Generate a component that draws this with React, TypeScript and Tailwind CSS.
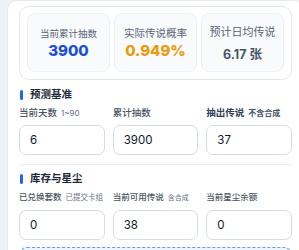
import React from 'react';

const Field = ({
  label,
  note,
  value,
  size = 'text-[9.5px]',
  noteSize = 'text-[8px]',
  strong = false,
}: {
  label: string;
  note?: string;
  value: string;
  size?: string;
  noteSize?: string;
  strong?: boolean;
}) => (
  <div className="flex min-w-0 flex-col">
    <div className="flex h-[13px] items-baseline gap-[4px] whitespace-nowrap">
      <span className={`${size} ${strong ? 'font-semibold text-[#334155]' : 'font-medium text-[#4b5563]'}`}>{label}</span>
      {note && (
        <span className={`${noteSize} ${strong ? 'font-semibold text-[#475569]' : 'text-[#6b7280]'}`}>{note}</span>
      )}
    </div>
    <input
      type="text"
      readOnly
      value={value}
      className="mt-[6px] h-[30px] w-full rounded-[7px] border border-[#d6dde8] bg-white px-[10px] text-[11.5px] text-[#111827] outline-none"
    />
  </div>
);

const SectionTitle = ({ title }: { title: string }) => (
  <div className="flex h-[14px] items-center gap-[7px] pl-[1px]">
    <div className="h-[10px] w-[3px] rounded-full bg-[#2563eb]" />
    <span className="text-[10.5px] font-bold text-[#1e293b]">{title}</span>
  </div>
);

const App = () => {
  return (
    <div className="h-screen w-full overflow-hidden bg-[#eef2f7] pl-[7px] font-['Inter','Noto_Sans_CJK_SC',sans-serif]">
      <div className="w-[297px] rounded-[10px] border border-[#e5e9f0] bg-white px-[11px] pt-[5px] pb-[20px]">
        {/* summary */}
        <div className="rounded-[10px] border border-[#e3e8ef] px-[7px] pt-[6px] pb-[7px]">
          <div className="grid grid-cols-3 gap-[4px]">
            <div className="flex h-[59px] flex-col items-center justify-center rounded-[8px] border border-[#edf0f5] bg-[#f8fafc] pt-[2px]">
              <span className="text-[9.5px] leading-[12px] text-[#5b6576]">当前累计抽数</span>
              <span className="mt-[2px] text-[15px] font-extrabold leading-[18px] text-[#1d4ed8]">3900</span>
            </div>
            <div className="flex h-[59px] flex-col items-center justify-center rounded-[8px] border border-[#edf0f5] bg-[#f8fafc] pt-[2px]">
              <span className="text-[10.5px] leading-[12px] text-[#5b6576]">实际传说概率</span>
              <span className="mt-[2px] text-[15px] font-extrabold leading-[18px] text-[#eb9a0b]">0.949%</span>
            </div>
            <div className="flex h-[59px] flex-col items-center justify-center rounded-[8px] border border-[#edf0f5] bg-[#f8fafc] pt-[2px]">
              <span className="text-[11px] leading-[14px] text-[#5b6576]">预计日均传说</span>
              <span className="mt-[8px] text-[12.5px] font-bold leading-[16px] text-[#475569]">6.17 张</span>
            </div>
          </div>
        </div>

        {/* forecast base */}
        <div className="mt-[8px]">
          <SectionTitle title="预测基准" />
          <div className="mt-[4px] grid grid-cols-3 gap-x-[8px]">
            <Field label="当前天数" note="1~90" value="6" />
            <Field label="累计抽数" value="3900" />
            <Field label="抽出传说" note="不含合成" value="37" strong />
          </div>
        </div>

        <div className="mt-[9px] border-t border-[#e8ecf2]" />

        {/* stock & dust */}
        <div className="mt-[7px]">
          <SectionTitle title="库存与星尘" />
          <div className="mt-[5px] grid grid-cols-3 gap-x-[8px]">
            <Field label="已兑换套数" note="已提交卡组" value="0" size="text-[8.5px]" noteSize="text-[7.5px]" />
            <Field label="当前可用传说" note="含合成" value="38" size="text-[8.5px]" noteSize="text-[7px]" />
            <Field label="当前星尘余额" value="0" size="text-[8.5px]" />
          </div>
        </div>

        <div className="mt-[7px] h-[40px] rounded-[8px] border border-dashed border-[#5f9cf5] bg-[#eef5ff]" />
      </div>
    </div>
  );
};

export default App;
